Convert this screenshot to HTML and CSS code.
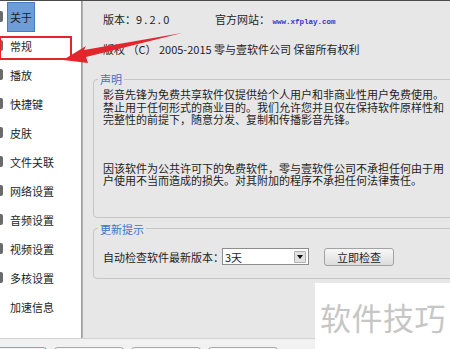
FILE: index.html
```html
<!DOCTYPE html>
<html lang="zh-CN">
<head>
    <meta charset="UTF-8">
    <title>选项 - 关于</title>
    <link rel="stylesheet" href="styles.css">
</head>
<body>

<div class="window">
    <div class="main">
        <ul class="nav">
            <li class="active"><span class="ico"></span><span class="label">关于</span></li>
            <li><span class="ico"></span><span class="label">常规</span></li>
            <li><span class="ico"></span><span class="label">播放</span></li>
            <li><span class="ico"></span><span class="label">快捷键</span></li>
            <li><span class="ico"></span><span class="label">皮肤</span></li>
            <li><span class="ico"></span><span class="label">文件关联</span></li>
            <li><span class="ico"></span><span class="label">网络设置</span></li>
            <li><span class="ico"></span><span class="label">音频设置</span></li>
            <li><span class="ico"></span><span class="label">视频设置</span></li>
            <li><span class="ico"></span><span class="label">多核设置</span></li>
            <li><span class="ico blank"></span><span class="label">加速信息</span></li>
        </ul>

        <div class="content">
            <div class="info-row">
                <span class="version">版本：<span class="num">9.2.0</span></span>
                <span class="site">官方网站： <a class="url">www.xfplay.com</a></span>
            </div>
            <div class="info-row copyright">版权 （C） 2005-2015 零与壹软件公司 保留所有权利</div>

            <fieldset class="group notice">
                <legend>声明</legend>
                <p>影音先锋为免费共享软件仅提供给个人用户和非商业性用户免费使用。<br>禁止用于任何形式的商业目的。我们允许您并且仅在保持软件原样性和<br>完整性的前提下，随意分发、复制和传播影音先锋。</p>
                <p class="second">因该软件为公共许可下的免费软件，零与壹软件公司不承担任何由于用<br>户使用不当而造成的损失。对其附加的程序不承担任何法律责任。</p>
            </fieldset>

            <fieldset class="group update">
                <legend>更新提示</legend>
                <div class="update-row">
                    <span class="field-label">自动检查软件最新版本：</span>
                    <div class="select">
                        <span class="value">3天</span>
                        <span class="arrow"></span>
                    </div>
                    <button type="button" class="check-btn">立即检查</button>
                </div>
            </fieldset>
        </div>
    </div>

    <div class="tabs">
        <span class="tab first"></span>
        <span class="tab"></span>
        <span class="tab"></span>
        <span class="tab"></span>
    </div>

    <svg class="annotation" width="450" height="349" viewBox="0 0 450 349">
        <rect x="0" y="37" width="71" height="22" fill="none" stroke="#e3262c" stroke-width="2"/>
        <polygon points="63,60 86,46 84,50 182,33 86,57 88,63" fill="#e3262c"/>
    </svg>

    <div class="watermark">软件技巧</div>
</div>

</body>
</html>
```

FILE: styles.css
```css
body {
    margin: 0;
    font-family: "Noto Sans CJK SC", "DejaVu Sans", sans-serif;
    font-size: 11px;
    color: #1e1e1e;
    background: #ececec;
}
.window {
    position: relative;
    width: 450px;
    height: 349px;
    overflow: hidden;
    border-top: 1px solid #4a4a4a;
    box-sizing: border-box;
}
.main {
    display: flex;
    height: 337px;
}
.nav {
    list-style: none;
    margin: 0;
    padding: 1px 0 0;
    width: 81px;
    background: #fff;
    border-right: 1px solid #9c9c9c;
    flex-shrink: 0;
}
.nav li {
    display: flex;
    align-items: center;
    height: 29px;
}
.ico {
    width: 11px;
    height: 11px;
    margin-left: -8px;
    border-radius: 2px;
    background: #6b6b6b;
}
.ico.blank {
    background: transparent;
}
.label {
    margin-left: 4px;
    padding: 0 2px;
    border: 1px solid transparent;
    line-height: 28px;
    white-space: nowrap;
}
.nav li.active .label {
    background: #6e9cd6;
    border-color: #4c7bbb;
}
.content {
    flex: 1;
    background: #e7e7e7;
    border-left: 1px solid #b4b4b4;
    padding: 11px 0 0 10px;
    overflow: hidden;
}
.info-row {
    display: flex;
    padding-left: 10px;
    line-height: 14px;
    white-space: nowrap;
}
.version {
    width: 112px;
}
.version .num {
    letter-spacing: 2.2px;
}
.url {
    color: #3434c6;
    font-family: "Liberation Mono", monospace;
    font-size: 7.5px;
    font-weight: bold;
}
.copyright {
    margin-top: 13px;
}
.group {
    margin: 17px -20px 0 0;
    padding: 0 0 30px 9px;
    border: 1px solid #c6c6c6;
    border-radius: 4px;
}
.group legend {
    margin-left: -5px;
    padding: 0 2px;
    color: #3f72c8;
    line-height: 12px;
}
.notice p {
    margin: 3px 0 0;
    line-height: 12.5px;
    white-space: nowrap;
}
.notice p.second {
    margin-top: 36px;
}
.update {
    margin-top: 5px;
    padding-bottom: 12px;
}
.update-row {
    display: flex;
    align-items: center;
    margin-top: 13px;
    height: 18px;
}
.field-label {
    width: 119px;
    white-space: nowrap;
}
.select {
    display: flex;
    align-items: center;
    justify-content: space-between;
    width: 87px;
    height: 17px;
    box-sizing: border-box;
    border: 1px solid #8d8d8d;
    background: #fff;
    padding: 0 2px 0 2px;
}
.select .arrow {
    width: 10px;
    height: 10px;
    background: #e2e2e2;
    border: 1px solid #b0b0b0;
    border-radius: 1px;
    position: relative;
}
.select .arrow::after {
    content: "";
    position: absolute;
    left: 2px;
    top: 3px;
    border-left: 3px solid transparent;
    border-right: 3px solid transparent;
    border-top: 4px solid #111;
}
.check-btn {
    margin-left: 15px;
    width: 70px;
    height: 18px;
    padding: 0;
    font-family: inherit;
    font-size: 11px;
    color: #222;
    background: linear-gradient(#f7f7f7, #dcdcdc);
    border: 1px solid #a2a2a2;
    border-radius: 3px;
}
.tabs {
    display: flex;
    gap: 7px;
    height: 11px;
    padding: 8px 0 0 0;
    box-sizing: border-box;
    border-top: 1px solid #d2d2d2;
    background: #f1f1f1;
}
.tab {
    width: 68px;
    height: 6px;
    border: 1px solid #a9a9a9;
    border-bottom: none;
    border-radius: 4px 4px 0 0;
    background: #f6f6f6;
}
.tab.first {
    width: 48px;
    margin-left: -3px;
    border-color: #7fa6cc;
}
.annotation {
    position: absolute;
    left: 0;
    top: -1px;
    pointer-events: none;
}
.watermark {
    position: absolute;
    left: 315px;
    top: 282px;
    width: 135px;
    height: 67px;
    background: #fff;
    color: #c6c6c6;
    font-size: 31px;
    line-height: 67px;
    padding-left: 5px;
    box-sizing: border-box;
    letter-spacing: 0.5px;
    white-space: nowrap;
}
```
